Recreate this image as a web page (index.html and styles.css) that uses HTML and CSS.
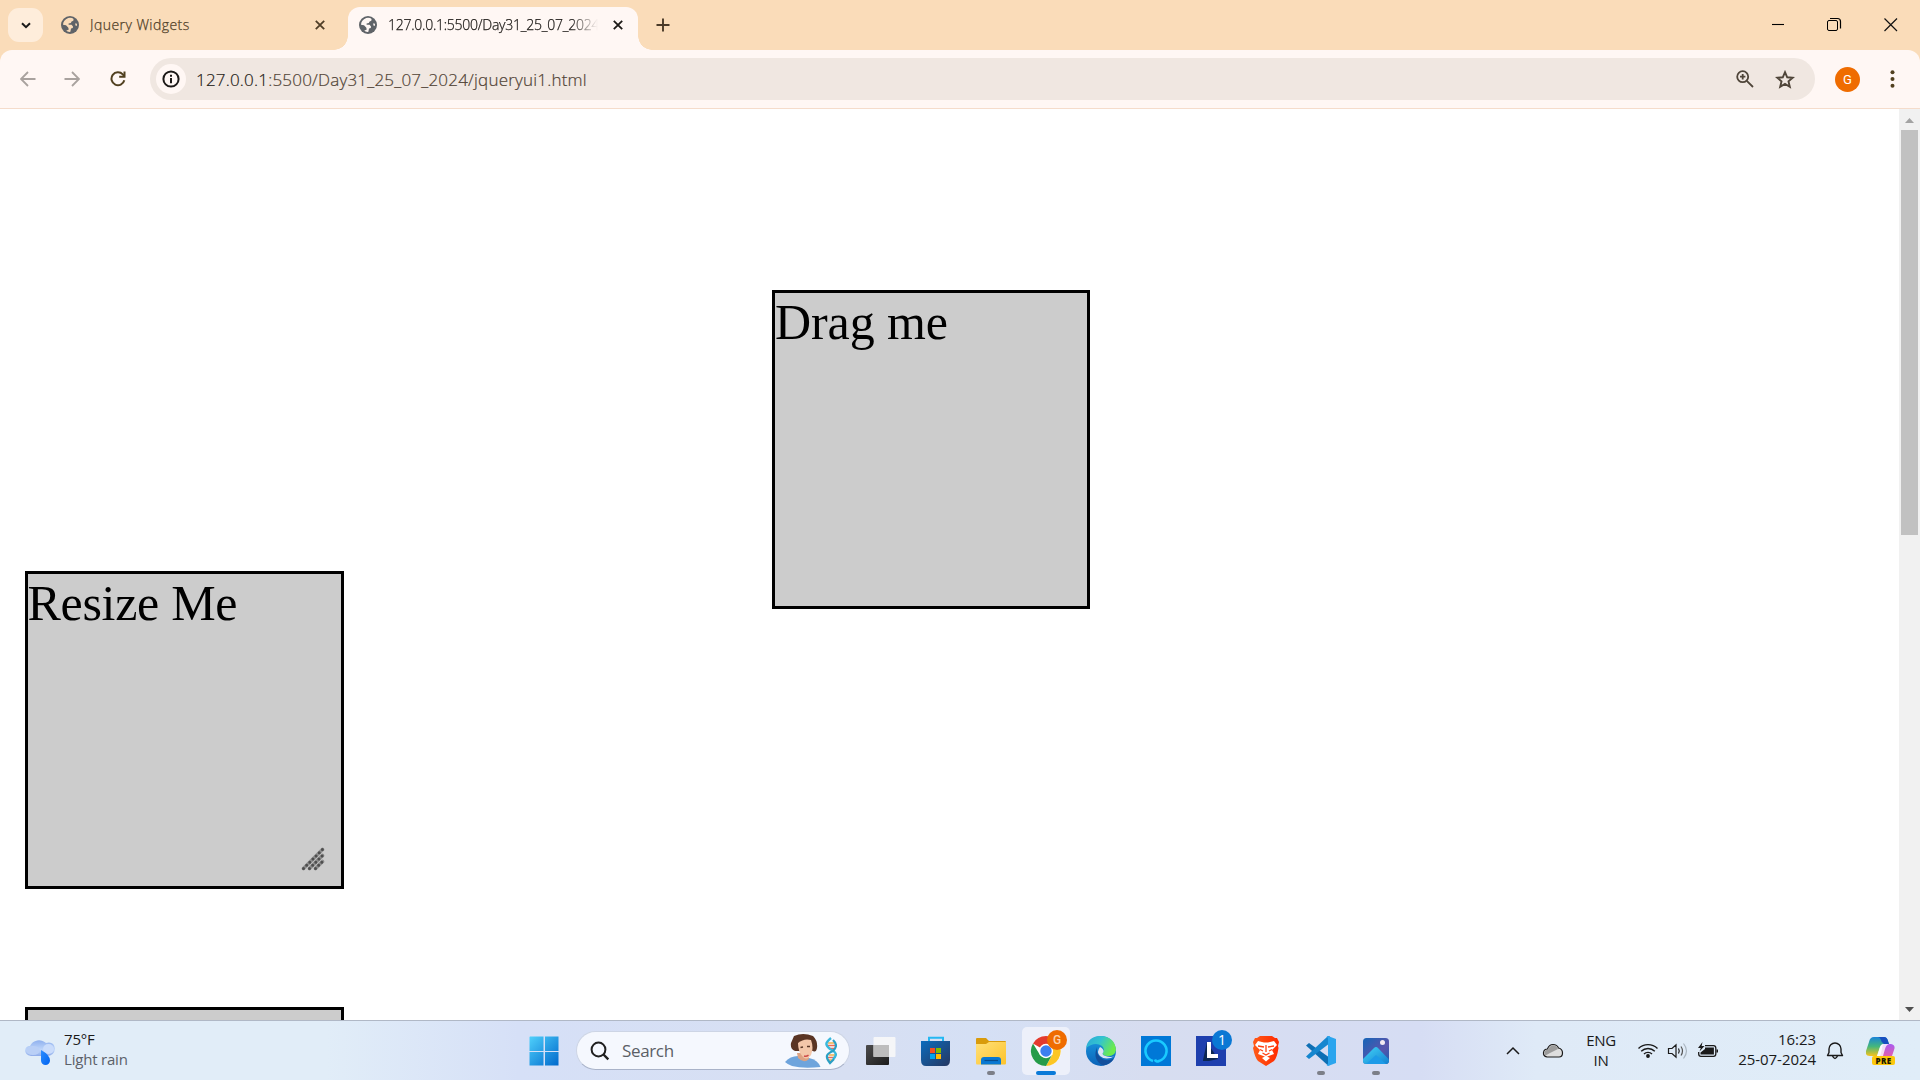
FILE: index.html
```html
<!DOCTYPE html>
<html lang="en">
<head>
<meta charset="utf-8">
<title>jQuery UI</title>
<link rel="stylesheet" href="styles.css">
</head>
<body>
<svg width="0" height="0" class="defs">
  <defs>
    <symbol id="globe" viewBox="0 0 18 18">
      <circle cx="9" cy="9" r="9" fill="#5f6368"/>
      <path d="M7.200 2 Q10.800 1.400 12.600 3 L12.300 4.800 L10.600 5.400 L9.800 7 L7.600 7.400 L7.600 8.800 L10.600 8.800 L12 10.400 L11.800 12 L10 12.600 L9.400 15.800 Q7 16.200 5.200 14.800 L7.800 13.600 L7.200 11.400 L5 9.300 L2 8.800 Q2.200 4 7.200 2z M14.600 7 L16 8 L15.800 10 L14.200 9.200z" fill="currentColor"/>
    </symbol>
    <symbol id="close" viewBox="0 0 10 10"><path d="M.8 .8 9.2 9.2M9.2 .8 .8 9.2" fill="none" stroke="currentColor" stroke-width="1.8"/></symbol>
    <linearGradient id="win" x1="0" y1="0" x2="1" y2="1"><stop offset="0" stop-color="#4fd0fb"/><stop offset="1" stop-color="#0069cc"/></linearGradient>
    <linearGradient id="cloud" x1="0" y1="0" x2="0" y2="1"><stop offset="0" stop-color="#8fb0ee"/><stop offset=".6" stop-color="#bfd6fa"/><stop offset="1" stop-color="#8facea"/></linearGradient>
    <linearGradient id="drop" x1="0" y1="0" x2="1" y2="1"><stop offset="0" stop-color="#2d8dff"/><stop offset="1" stop-color="#0063f0"/></linearGradient>
    <linearGradient id="store" x1="0" y1="0" x2="1" y2="1"><stop offset="0" stop-color="#0b6cbd"/><stop offset="1" stop-color="#263761"/></linearGradient>
    <linearGradient id="folder" x1="0" y1="0" x2="1" y2="1"><stop offset="0" stop-color="#ffe07a"/><stop offset="1" stop-color="#fdc32a"/></linearGradient>
    <linearGradient id="dark" x1="0" y1="0" x2="1" y2="1"><stop offset="0" stop-color="#4c4c4c"/><stop offset="1" stop-color="#1c1c1c"/></linearGradient>
    <linearGradient id="edgeTop" x1="0" y1="0" x2="1" y2=".4"><stop offset="0" stop-color="#2ca8d8"/><stop offset=".5" stop-color="#33c4cf"/><stop offset="1" stop-color="#6ceb4c"/></linearGradient>
    <linearGradient id="edgeLow" x1="0" y1="0" x2="0" y2="1"><stop offset="0" stop-color="#1b9de2"/><stop offset="1" stop-color="#0a62b8"/></linearGradient>
    <linearGradient id="brave" x1="0" y1="0" x2="1" y2="0"><stop offset="0" stop-color="#ff5a18"/><stop offset="1" stop-color="#ff2a00"/></linearGradient>
    <linearGradient id="photo" x1="0" y1="0" x2="1" y2="1"><stop offset="0" stop-color="#1465b8"/><stop offset=".6" stop-color="#5a55ac"/><stop offset="1" stop-color="#1b5fb0"/></linearGradient>
    <linearGradient id="hill" x1="0" y1="0" x2="1" y2="1"><stop offset="0" stop-color="#42d4f8"/><stop offset="1" stop-color="#1380d0"/></linearGradient>
    <linearGradient id="copA" x1="0" y1="0" x2="0" y2="1"><stop offset="0" stop-color="#1a84d8"/><stop offset=".5" stop-color="#45b77b"/><stop offset="1" stop-color="#f6c31a"/></linearGradient>
    <linearGradient id="copB" x1="0" y1="0" x2="0" y2="1"><stop offset="0" stop-color="#a95cf0"/><stop offset="1" stop-color="#f2609a"/></linearGradient>
  </defs>
</svg>

<div class="screen">
  <header class="tabstrip">
    <div class="tab-search"><svg width="10" height="7" viewBox="0 0 10 7"><path d="M1 1.2 5 5.2 9 1.2" fill="none" stroke="#1a1a1a" stroke-width="2"/></svg></div>
    <div class="tab tab-idle">
      <svg class="globe" width="18" height="18"><use href="#globe"/></svg>
      <span class="tab-title">Jquery Widgets</span>
      <svg class="tab-close" width="10" height="10"><use href="#close"/></svg>
    </div>
    <div class="tab tab-active">
      <svg class="globe" width="18" height="18"><use href="#globe"/></svg>
      <span class="tab-title tab-fade">127.0.0.1:5500/Day31_25_07_2024</span>
      <svg class="tab-close" width="10" height="10"><use href="#close"/></svg>
    </div>
    <svg class="new-tab" width="14" height="14" viewBox="0 0 14 14"><path d="M7 .5V13.500M.5 7H13.500" stroke="#4a3a28" stroke-width="1.900"/></svg>
    <div class="window-buttons">
      <svg width="56" height="48" viewBox="0 0 56 48"><path d="M22 24.500H34" stroke="#000" stroke-width="1.100"/></svg>
      <svg width="56" height="48" viewBox="0 0 56 48"><rect x="21.500" y="20.500" width="10" height="10" rx="1.500" fill="none" stroke="#000"/><path d="M24 18.500H31.500Q34.500 18.500 34.500 21.500V28.500" fill="none" stroke="#000" stroke-width="1.200"/></svg>
      <svg width="57" height="48" viewBox="0 0 57 48"><path d="M22.500 18.500 35 31M35 18.500 22.500 31" stroke="#111" stroke-width="1.200"/></svg>
    </div>
  </header>

  <div class="toolbar">
    <svg class="nav" width="16" height="16" viewBox="0 0 16 16"><path d="M15.500 8H1.500M8 1 1 8 8 15" fill="none" stroke="#a9a29e" stroke-width="1.800"/></svg>
    <svg class="nav" width="16" height="16" viewBox="0 0 16 16"><path d="M.5 8H14.500M8 1 15 8 8 15" fill="none" stroke="#a9a29e" stroke-width="1.800"/></svg>
    <svg class="nav" width="16" height="16" viewBox="0 0 16 16"><path d="M14.300 9.300A6.500 6.500 0 1 1 12.800 3.400L14 4.800" fill="none" stroke="#51401f" stroke-width="2"/><path d="M15.500 .5V6.800H9.200V4.800H13.500V.5z" fill="#51401f"/></svg>
    <div class="omnibox">
      <span class="site-info"><svg width="18" height="18" viewBox="0 0 18 18"><circle cx="9" cy="9" r="7.600" fill="none" stroke="#1c1917" stroke-width="2"/><path d="M9 8V13.200M9 4.800V6.800" stroke="#1c1917" stroke-width="2"/></svg></span>
      <span class="url"><b>127.0.0.1</b>:5500/Day31_25_07_2024/jqueryui1.html</span>
      <svg class="zoomed" width="18" height="18" viewBox="0 0 18 18"><circle cx="6.700" cy="6.700" r="5.500" fill="none" stroke="#4f4539" stroke-width="1.800"/><path d="M10.800 10.800 17 17M6.700 4V9.400M4 6.700H9.400" stroke="#4f4539" stroke-width="1.800"/></svg>
      <svg width="20" height="19" viewBox="0 0 20 19"><path d="M10 2.200 12.200 7.300 17.700 7.800 13.500 11.400 14.800 16.800 10 13.900 5.200 16.800 6.500 11.400 2.300 7.800 7.800 7.300z" fill="none" stroke="#4f4539" stroke-width="1.900"/></svg>
    </div>
    <span class="avatar">G</span>
    <svg width="5" height="18" viewBox="0 0 5 18" fill="#51401f"><circle cx="2.500" cy="2.200" r="2"/><circle cx="2.500" cy="9" r="2"/><circle cx="2.500" cy="15.800" r="2"/></svg>
  </div>

  <main class="viewport">
    <div class="page">
      <div class="box draggable">Drag me</div>
      <div class="box resizable">Resize Me
        <svg class="grip" width="24" height="24" viewBox="0 0 24 24"><path d="M2.500 21.500 21.500 2.500M8.500 21.500 21.500 8.500M14.500 21.500 21.500 14.500" fill="none" stroke="#8e8e8e" stroke-width="3.600" stroke-linecap="round"/><path d="M2.500 21.500 21.500 2.500M8.500 21.500 21.500 8.500M14.500 21.500 21.500 14.500" fill="none" stroke="#4e4e4e" stroke-width="3" stroke-linecap="round" stroke-dasharray="0 4.450"/></svg>
      </div>
      <div class="box next"></div>
    </div>
    <div class="scrollbar">
      <svg width="21" height="21" viewBox="0 0 21 21"><path d="M6 14H15L10.500 9z" fill="#a3a3a3"/></svg>
      <div class="thumb"></div>
      <svg class="down" width="21" height="21" viewBox="0 0 21 21"><path d="M6 8H15L10.500 13z" fill="#505050"/></svg>
    </div>
  </main>

  <footer class="taskbar">
    <div class="weather">
      <svg width="30" height="28" viewBox="0 0 30 28"><path d="M5 9A10 10 0 0 1 21 6Q29 4 30 12Q29 19 22 19H6Q0 18 0 13Q1 9 5 9z" fill="url(#cloud)"/><ellipse cx="23.500" cy="12" rx="5.500" ry="5" fill="#cadcfb"/><ellipse cx="8" cy="13.500" rx="7" ry="4.500" fill="#b9cff6"/><path d="M16 13Q25 18 25 23.500A4.500 4.500 0 0 1 16 23.500z" fill="url(#drop)"/></svg>
      <div class="weather-text"><span>75°F</span><span class="muted">Light rain</span></div>
    </div>

    <div class="apps">
      <svg width="48" height="48" viewBox="0 0 48 48"><path d="M10 9.500H23.500V24H9.500V10zM25 9.500H38.500V24H25zM9.500 25H23.500V38.500H9.500zM25 25H38.500V38.500H25z" fill="url(#win)"/></svg>
      <div class="search">
        <svg width="20" height="20" viewBox="0 0 20 20"><circle cx="8.500" cy="8.500" r="6.900" fill="none" stroke="#202020" stroke-width="2"/><path d="M13.500 13.500 18.300 18.300" stroke="#202020" stroke-width="2.400"/></svg>
        <span class="search-label">Search</span>
        <svg width="36" height="34" viewBox="0 0 36 34"><path d="M0 28Q5 22 13 22L24 24Q33 26 35.500 33Q18 35 7 32Q2 30 0 28z" fill="#6ea4dc"/><path d="M12 19H24V25Q19 30 13 24z" fill="#dca283"/><path d="M9 2Q18-2 28 2Q33 7 32 14Q31 19 28 17L10 17Q5 15 6 9z" fill="#5a3524"/><path d="M13 9Q19 4 26 6Q29 14 26 21Q22 27 18 23Q13 18 13 9z" fill="#f3c7aa"/><path d="M15.500 13.500 18 13M22 12.500H25" stroke="#593828" stroke-width="1.300"/><path d="M19 22Q21.500 23 23.500 21" stroke="#cf4b49" stroke-width="1.400" fill="none"/></svg>
        <svg class="dna" width="12" height="28" viewBox="0 0 12 28"><path d="M3 6H9M4 18H10M3 23H7" stroke="#f2b04a" stroke-width="1.600"/><path d="M2 8.500H10M4 11.500H10M3 20.500H10" stroke="#ee6c55" stroke-width="1.600"/><path d="M6 1C0 6 0 8 5 12C11 15 13 18 8 22" fill="none" stroke="#38b8dc" stroke-width="2.400"/><path d="M8 3C12 7 12 10 8 14C1 17 0 20 5 26L9 22" fill="none" stroke="#2a9fc4" stroke-width="2.200"/></svg>
      </div>
      <svg width="48" height="48" viewBox="0 0 48 48"><rect x="9" y="18" width="23" height="20" rx="1" fill="url(#dark)"/><rect x="16.500" y="10" width="22" height="20" rx="1" fill="#f8f8f8" opacity=".9"/><path d="M16.500 18H32V30H16.500z" fill="#bdbdbd"/></svg>
      <svg width="48" height="48" viewBox="0 0 48 48"><path d="M17 15V10.800H31V15" fill="none" stroke="#25b8f2" stroke-width="2"/><path d="M9 14H38V33Q38 39 33 39H14Q9 39 9 33z" fill="url(#store)"/><path d="M18 21H23V26H18z" fill="#f25022"/><path d="M24 21H29V26H24z" fill="#7fba00"/><path d="M18 27H23V32H18z" fill="#00a4ef"/><path d="M24 27H29V32H24z" fill="#ffb900"/></svg>
      <div class="app"><svg width="48" height="48" viewBox="0 0 48 48"><path d="M9 12Q9 11 10 11H19L22 14H38Q39 14 39 15V20H9z" fill="#d99b0b"/><path d="M9 17H19L22 15H39V36Q39 37.500 38 37.500H10Q9 37.500 9 36z" fill="url(#folder)"/><path d="M14 37.500V33Q14 30 17 30H31Q34 30 34 33V37.500z" fill="#0878d2"/><path d="M17.500 33.500H31" stroke="#064c8e" stroke-width="1.200"/></svg></div>
      <div class="app current"><svg width="48" height="48" viewBox="0 0 48 48"><circle cx="24" cy="24" r="15" fill="#fff"/><path d="M24 24 11 16.500A15 15 0 0 1 37 16.500L24 17z" fill="#e33b2e"/><path d="M24 17H37A15 15 0 0 1 24 39L30.500 27.500z" fill="#fcc624"/><path d="M11 16.500 18 28Q21 31 24 31L30 28 24 39A15 15 0 0 1 11 16.500z" fill="#259b49"/><circle cx="24" cy="24" r="7.200" fill="#fff"/><circle cx="24" cy="24" r="5.700" fill="#3c7ff0"/></svg><span class="badge badge-g">G</span></div>
      <svg width="48" height="48" viewBox="0 0 48 48"><circle cx="24" cy="24" r="15" fill="url(#edgeLow)"/><path d="M9 21Q11 9 24 9Q38 10 39 23Q38 29 31 29Q25 29 26 26Q28 22 25 19Q18 14 9 21z" fill="url(#edgeTop)"/><path d="M20 20Q15 33 26 38.500Q34 37 37 31.500Q28 36 22 29Q19 25 20 20z" fill="#124f9c"/><path d="M23 20Q19 25 23 29Q29 34 38 29Q33 31 27 28.500Q24.500 27 26.500 25Q27 22 23 20z" fill="#dbe2f5"/></svg>
      <svg width="48" height="48" viewBox="0 0 48 48"><path d="M9 9H39V39H9z" fill="#0078d7"/><path d="M21 34A10.500 10.500 0 1 1 27 34Q24 35.500 23 32.500" fill="none" stroke="#19caff" stroke-width="2.600"/></svg>
      <div class="app"><svg width="48" height="48" viewBox="0 0 48 48"><path d="M9 9H39V39H9z" fill="#1e3fae"/><path d="M20 15 16 33V34H22L31 32z" fill="#0b2652"/><path d="M22 15V29H31" fill="none" stroke="#fff" stroke-width="4"/></svg><span class="badge badge-n">1</span></div>
      <svg width="48" height="48" viewBox="0 0 48 48"><path d="M15 11 18 9H30L33 11H35L37 15L36 19L36.500 21Q35 31 32 34L24 39L16 34Q13 31 11 21L12 19L11 15L13 11z" fill="url(#brave)"/><path d="M16 14 22 15.500H26L32 14L35 18L30 23L32 27L24 30L16 27L18 23L13 18zM20 31 24 29L28 31L24 34.500z" fill="#fff"/><path d="M16 19 22 20M32 19 26 20M24 18V25M20.500 26 24 28L27.500 26M18 22.500 21 24M30 22.500 27 24" stroke="#ff4214" stroke-width="1.300" fill="none"/></svg>
      <div class="app"><svg width="48" height="48" viewBox="0 0 48 48"><path d="M9 18.500 12 16 33 31V38L31 38.500z" fill="#0e6fb4"/><path d="M9 29.500 12 32 33 16V9.500L31 9z" fill="#1586cf"/><path d="M31 9 39 12V36L31 39 29.500 38Q31 38 31 36V12Q31 10 29.500 10z" fill="#2ba5ee"/></svg></div>
      <div class="app"><svg width="48" height="48" viewBox="0 0 48 48"><rect x="11" y="11" width="26" height="26" rx="3.500" fill="url(#photo)"/><path d="M11 32 22 21Q24 19 26 21L37 32.500V34Q36.500 37 34 37H14Q11 37 11 34z" fill="url(#hill)"/><path d="M14 37 24 28 34 37z" fill="#1d9be8"/><circle cx="30.500" cy="15.500" r="2.500" fill="#f3e9f2"/></svg></div>
    </div>

    <div class="tray">
      <svg width="26" height="20" viewBox="0 0 26 20"><path d="M7 13 13 7 19 13" fill="none" stroke="#1a1a1a" stroke-width="1.500"/></svg>
      <svg width="54" height="20" viewBox="0 0 54 20"><path d="M21 16Q17 15 17.500 11.500Q18 8 21.500 8Q23 3.500 27 3.500Q31 3.500 32.500 7Q36.500 8 36.500 12Q36.500 16 33 16z" fill="#dedede" stroke="#1a1a1a" stroke-width="1.200"/><path d="M18.300 12Q18.500 8.700 22 8.700Q24 4.300 27 4.200Q30.500 4.200 32 8L24 12L19.500 14.500z" fill="#9c9c9c"/></svg>
      <div class="lang"><span>ENG</span><span>IN</span></div>
      <svg width="30" height="20" viewBox="0 0 30 20" fill="none" stroke="#1a1a1a" stroke-width="1.400"><path d="M5.500 7.500A13.500 13.500 0 0 1 24.500 7.500M8.200 10.300A9.700 9.700 0 0 1 21.800 10.300M11 13A5.700 5.700 0 0 1 19 13"/><circle cx="15" cy="15" r="1.200" fill="#1a1a1a"/></svg>
      <svg width="30" height="20" viewBox="0 0 30 20" fill="none" stroke="#1a1a1a" stroke-width="1.200"><path d="M5.500 7.500H9L13 3.800V16.200L9 12.500H5.500zM15.500 7.500Q17 10 15.500 12.500"/><path d="M18 5.500Q21 10 18 14.500" stroke="#555"/><path d="M20.500 2.500Q26.500 10 20.500 17.500" stroke="#aab5bf"/></svg>
      <svg width="30" height="20" viewBox="0 0 30 20"><path d="M12 4.600H20.500Q22.800 4.600 22.800 7V13Q22.800 15.400 20.500 15.400H8Q5.700 15.400 5.700 13V11" fill="none" stroke="#1a1a1a" stroke-width="1.300"/><path d="M12 6.500H20.900V13.500H7.500V11.500L12 8zM23.500 8.500H25V11.500H23.500z" fill="#1a1a1a"/><path d="M9.500 1 5 7H7.800L6.500 10.500 11.500 5H8.600z" fill="#1a1a1a"/></svg>
      <div class="clock"><span>16:23</span><span>25-07-2024</span></div>
      <svg class="bell" width="18" height="20" viewBox="0 0 18 20"><path d="M1.500 14.500 3 11.500V8A6 6 0 0 1 15 8V11.500L16.500 14.500zM6.500 15Q9 20 11.500 15" fill="none" stroke="#1a1a1a" stroke-width="1.400" stroke-linejoin="round"/></svg>
      <div class="copilot">
        <svg width="29" height="28" viewBox="0 0 29 28"><path d="M8 0H18Q21 0 22 4L23 7H18Q15 7 14 10L11 19H4Q-1 19 0 14L3 5Q4 0 8 0z" fill="url(#copA)"/><path d="M12 0H18Q21 0 22 4L23 7H18Q15 5 15 3Q14 0 12 0z" fill="#174fbf"/><path d="M18 7H25Q30 8 28 13L26 19Q24 23 20 23H12Q15 18 16 12Q16 8 18 7z" fill="url(#copB)"/><path d="M18 7H23Q20 8 19 12L17 19H11L14 10Q15 7 18 7z" fill="#fff" opacity=".8"/></svg>
        <span class="pre">PRE</span>
      </div>
    </div>
  </footer>
</div>
</body>
</html>
```
FILE: styles.css
```css
* { box-sizing: border-box; }
body { margin: 0; font-family: "Open Sans", "Noto Sans", sans-serif; overflow: hidden; }
svg { display: block; flex: none; }
.defs { position: absolute; }
.screen { width: 1920px; height: 1080px; display: flex; flex-direction: column; overflow: hidden; background: #fadcb9; }

/* tab strip */
.tabstrip { height: 50px; flex: none; display: flex; align-items: flex-start; padding-left: 8px; }
.tab-search { width: 35px; height: 34px; margin: 8px 5px 0 0; border-radius: 11px; background: #feeddb; display: flex; align-items: center; justify-content: center; }
.tab { display: flex; align-items: center; height: 43px; margin-top: 7px; padding-bottom: 7px; }
.tab-idle { width: 300px; padding-left: 13px; color: #4f3e27; }
.tab-active { width: 290px; padding-left: 11px; background: #fff7f4; border-radius: 12px 12px 0 0; position: relative; color: #1d1a17; }
.tab-active::before, .tab-active::after { content: ""; position: absolute; bottom: 0; width: 14px; height: 14px; }
.tab-active::before { left: -14px; background: radial-gradient(circle at 0 0, transparent 13.5px, #fff7f4 14px); }
.tab-active::after { right: -14px; background: radial-gradient(circle at 100% 0, transparent 13.5px, #fff7f4 14px); }
.tab-idle .globe { color: #fadcb9; }
.tab-active .globe { color: #fff7f4; }
.tab-title { margin-left: 11px; width: 210px; padding-bottom: 1px; font-size: 14px; font-weight: 300; letter-spacing: 0.45px; white-space: nowrap; overflow: hidden; -webkit-text-stroke: 0.25px currentColor; }
.tab-idle .tab-title { width: 214px; }
.tab-idle .tab-close { margin-left: 11px; }
.tab-active .tab-close { margin-left: 15px; }
.tab-fade { letter-spacing: -0.25px; mask-image: linear-gradient(90deg, #000 87%, transparent); }
.new-tab { margin: 18px 0 0 18px; }
.window-buttons { display: flex; margin-left: auto; padding-right: 1px; }

/* toolbar */
.toolbar { height: 59px; flex: none; display: flex; align-items: center; background: #fff7f4; border-bottom: 1px solid #f5dccb; border-radius: 12px 12px 0 0; padding: 0 25px 0 20px; }
.nav { margin-right: 28px; }
.nav:nth-child(3) { margin-left: 2px; margin-right: 24px; }
.omnibox { width: 1665px; height: 42px; border-radius: 21px; background: #f0e7e1; display: flex; align-items: center; padding: 0 20px 0 6px; }
.site-info { width: 30px; height: 30px; border-radius: 50%; background: #fff7f4; display: flex; align-items: center; justify-content: center; }
.url { margin-left: 10px; margin-right: auto; font-size: 17px; font-weight: 300; letter-spacing: 0.2px; color: #4f4234; white-space: nowrap; -webkit-text-stroke: 0.2px currentColor; }
.url b { font-weight: inherit; color: #1f1b16; }
.zoomed { margin-right: 21px; }
.avatar { width: 25px; height: 25px; margin: 0 30px 0 20px; border-radius: 50%; background: #ef6c00; color: #fff; font: 13px/25px Roboto, sans-serif; text-align: center; }

/* page */
.viewport { height: 911px; flex: none; display: flex; background: #fff; overflow: hidden; }
.page { width: 1899px; position: relative; overflow: hidden; font-family: "Liberation Serif", "Times New Roman", serif; font-size: 50px; line-height: 57px; color: #000; }
.box { position: absolute; width: 319px; height: 319px; border: 3px solid #000; background: #ccc; }
.draggable { left: 772px; top: 181px; width: 318px; padding-top: 1px; letter-spacing: -0.1px; }
.resizable { left: 25px; top: 462px; height: 318px; padding-top: 1px; letter-spacing: -0.3px; text-indent: -0.5px; }
.next { left: 25px; top: 898px; }
.grip { position: absolute; right: 16px; bottom: 15px; filter: blur(0.4px); }
.scrollbar { width: 21px; display: flex; flex-direction: column; align-items: center; background: #f1f1f1; }
.thumb { width: 17px; height: 405px; background: #c1c1c1; }
.down { margin-top: auto; }

/* taskbar */
.taskbar { height: 60px; flex: none; display: flex; border-top: 1px solid #b0b8c6; background: linear-gradient(90deg, #e1edf8 0, #e1edf8 17%, #d6e0f7 27%, #d7dff2 44%, #d5e0f5 51%, #d7ddf0 60%, #d6ddf4 74%, #dfeaf7 80%, #e0edf8 100%); font-size: 15px; line-height: 20px; color: #1a1a1a; }
.weather { display: flex; align-items: center; width: 520px; padding-left: 25px; gap: 9px; }
.weather-text { display: flex; flex-direction: column; padding-bottom: 4px; letter-spacing: -0.2px; }
.muted { color: #5b6169; }
.apps { display: flex; align-items: center; gap: 7px; width: 980px; flex: none; }
.search { width: 274px; height: 39px; margin: 0 0 0 1px; border-radius: 20px; border: 1px solid #cdd5e5; border-bottom-color: #a9b3c9; background: #f5f8fe; display: flex; align-items: center; padding: 0 12px 0 13px; }
.search-label { margin: 0 auto 0 12px; font-size: 17px; letter-spacing: -0.35px; color: #5b5f66; }
.dna { margin-left: 4px; }
.app { width: 48px; height: 48px; position: relative; }
.app::after { content: ""; position: absolute; left: 20px; top: 44px; width: 8px; height: 4px; border-radius: 2px; background: #7c7f88; }
.app:has(.badge-n)::after { display: none; }
.current { background: #edf0fa; border-radius: 5px; }
.current::after { left: 14px; width: 20px; background: #0a7ad8; }
.badge { position: absolute; top: 3px; width: 20px; height: 20px; border-radius: 50%; color: #fff; text-align: center; font-size: 14px; line-height: 20px; }
.badge-g { left: 25px; background: #ef6c00; color: #fbd3ad; font: 500 12px/20px Roboto, sans-serif; }
.badge-n { left: 25px; background: #0a78d4; }
.tray { display: flex; align-items: center; flex: none; }
.lang { width: 42px; margin-right: 11px; padding-bottom: 2px; display: flex; flex-direction: column; align-items: center; letter-spacing: -0.3px; }
.clock { width: 93px; display: flex; flex-direction: column; align-items: flex-end; padding-bottom: 4px; letter-spacing: -0.05px; }
.bell { margin-left: 10px; }
.copilot { margin-left: 22px; position: relative; }
.pre { position: absolute; left: 6px; top: 19px; width: 23px; height: 9px; border-radius: 2px; background: #fcc80c; color: #1a1a00; font-size: 8px; font-weight: 800; line-height: 9px; letter-spacing: .3px; text-align: center; }
```
